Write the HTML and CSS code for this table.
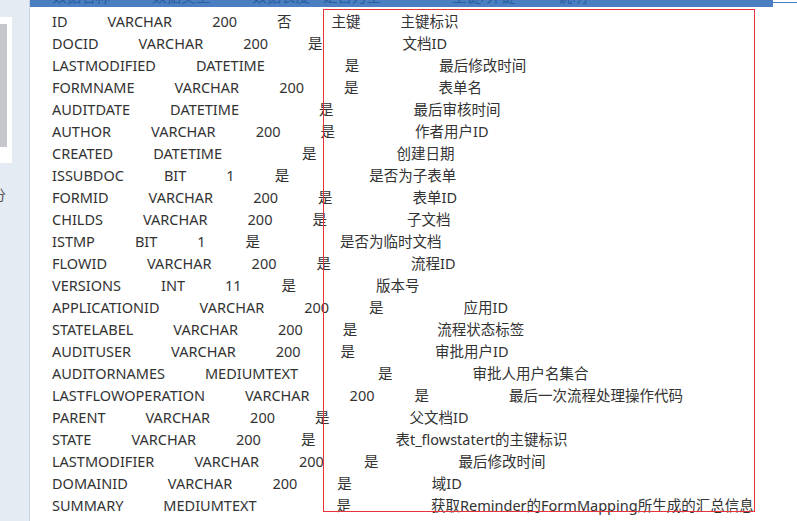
FILE: index.html
```html
<!DOCTYPE html>
<html>
<head>
<meta charset="utf-8">
<link rel="stylesheet" href="styles.css">
</head>
<body>
<div class="app">
  <aside class="side">
    <div class="thumb"><div class="thumb-inner"></div></div>
    <div class="side-char">分</div>
  </aside>
  <main class="main">
    <div class="topbar">
      <div class="head">
        <div class="head-text">
          <span class="h1">数据名称</span><span class="h2">数据类型</span><span class="h3">数据长度</span><span class="h4">是否为空</span><span class="h5">主键/外键</span><span class="h6">说明</span>
        </div>
      </div>
      <div class="corner"></div>
    </div>
    <div class="rows">
      <div class="row"><span>ID</span><span>VARCHAR</span><span>200</span><span>否</span><span>主键</span><span>主键标识</span></div>
      <div class="row"><span>DOCID</span><span>VARCHAR</span><span>200</span><span>是</span><span></span><span>文档ID</span></div>
      <div class="row"><span>LASTMODIFIED</span><span>DATETIME</span><span></span><span>是</span><span></span><span>最后修改时间</span></div>
      <div class="row"><span>FORMNAME</span><span>VARCHAR</span><span>200</span><span>是</span><span></span><span>表单名</span></div>
      <div class="row"><span>AUDITDATE</span><span>DATETIME</span><span></span><span>是</span><span></span><span>最后审核时间</span></div>
      <div class="row"><span>AUTHOR</span><span>VARCHAR</span><span>200</span><span>是</span><span></span><span>作者用户ID</span></div>
      <div class="row"><span>CREATED</span><span>DATETIME</span><span></span><span>是</span><span></span><span>创建日期</span></div>
      <div class="row"><span>ISSUBDOC</span><span>BIT</span><span>1</span><span>是</span><span></span><span>是否为子表单</span></div>
      <div class="row"><span>FORMID</span><span>VARCHAR</span><span>200</span><span>是</span><span></span><span>表单ID</span></div>
      <div class="row"><span>CHILDS</span><span>VARCHAR</span><span>200</span><span>是</span><span></span><span>子文档</span></div>
      <div class="row"><span>ISTMP</span><span>BIT</span><span>1</span><span>是</span><span></span><span>是否为临时文档</span></div>
      <div class="row"><span>FLOWID</span><span>VARCHAR</span><span>200</span><span>是</span><span></span><span>流程ID</span></div>
      <div class="row"><span>VERSIONS</span><span>INT</span><span>11</span><span>是</span><span></span><span>版本号</span></div>
      <div class="row"><span>APPLICATIONID</span><span>VARCHAR</span><span>200</span><span>是</span><span></span><span>应用ID</span></div>
      <div class="row"><span>STATELABEL</span><span>VARCHAR</span><span>200</span><span>是</span><span></span><span>流程状态标签</span></div>
      <div class="row"><span>AUDITUSER</span><span>VARCHAR</span><span>200</span><span>是</span><span></span><span>审批用户ID</span></div>
      <div class="row"><span>AUDITORNAMES</span><span>MEDIUMTEXT</span><span></span><span>是</span><span></span><span>审批人用户名集合</span></div>
      <div class="row"><span>LASTFLOWOPERATION</span><span>VARCHAR</span><span>200</span><span>是</span><span></span><span>最后一次流程处理操作代码</span></div>
      <div class="row"><span>PARENT</span><span>VARCHAR</span><span>200</span><span>是</span><span></span><span>父文档ID</span></div>
      <div class="row"><span>STATE</span><span>VARCHAR</span><span>200</span><span>是</span><span></span><span>表t_flowstatert的主键标识</span></div>
      <div class="row"><span>LASTMODIFIER</span><span>VARCHAR</span><span>200</span><span>是</span><span></span><span>最后修改时间</span></div>
      <div class="row"><span>DOMAINID</span><span>VARCHAR</span><span>200</span><span>是</span><span></span><span>域ID</span></div>
      <div class="row"><span>SUMMARY</span><span>MEDIUMTEXT</span><span></span><span>是</span><span></span><span>获取Reminder的FormMapping所生成的汇总信息</span></div>
    </div>
    <div class="highlight"></div>
  </main>
</div>
</body>
</html>
```

FILE: styles.css
```css
html, body {
  margin: 0;
  padding: 0;
  background: #ffffff;
}
body {
  width: 797px;
  height: 521px;
  overflow: hidden;
  font-family: "Noto Sans", "Noto Sans CJK SC", sans-serif;
  font-size: 14.5px;
  color: #333333;
}
.app {
  display: flex;
  height: 521px;
}
.side {
  width: 29px;
  flex: none;
  background: #e4ebf3;
  border-right: 1px solid #c6d4e3;
  padding-top: 17px;
  box-sizing: content-box;
  overflow: hidden;
}
.thumb {
  width: 12px;
  height: 146px;
  background: #ffffff;
  padding-top: 7px;
  box-sizing: border-box;
}
.thumb-inner {
  width: 7px;
  height: 123px;
  background: #c5c7cd;
}
.side-char {
  margin-top: 24px;
  margin-left: -8px;
  font-size: 14px;
  line-height: 16px;
  color: #555555;
}
.main {
  flex: 1;
  position: relative;
  min-width: 0;
}
.topbar {
  display: flex;
  height: 7px;
}
.head {
  width: 743px;
  height: 7px;
  background: #4a7fc2;
  overflow: hidden;
}
.head-text {
  display: flex;
  padding-left: 22px;
  margin-top: -12px;
  line-height: 16px;
  color: #2d5da0;
  white-space: nowrap;
}
.h1, .h2 { width: 100px; }
.h3 { width: 71px; }
.h4 { width: 129px; }
.h5 { width: 106px; }
.corner {
  flex: 1;
  height: 2px;
  border-bottom: 1px solid #4a7fc2;
  background: #ffffff;
}
.rows {
  padding-top: 3px;
  padding-left: 22px;
}
.row {
  display: flex;
  gap: 40px;
  height: 22px;
  line-height: 22px;
  white-space: nowrap;
}
.highlight {
  position: absolute;
  left: 293px;
  top: 9px;
  width: 430px;
  height: 501px;
  border: 1px solid #e8333a;
  pointer-events: none;
}
```
